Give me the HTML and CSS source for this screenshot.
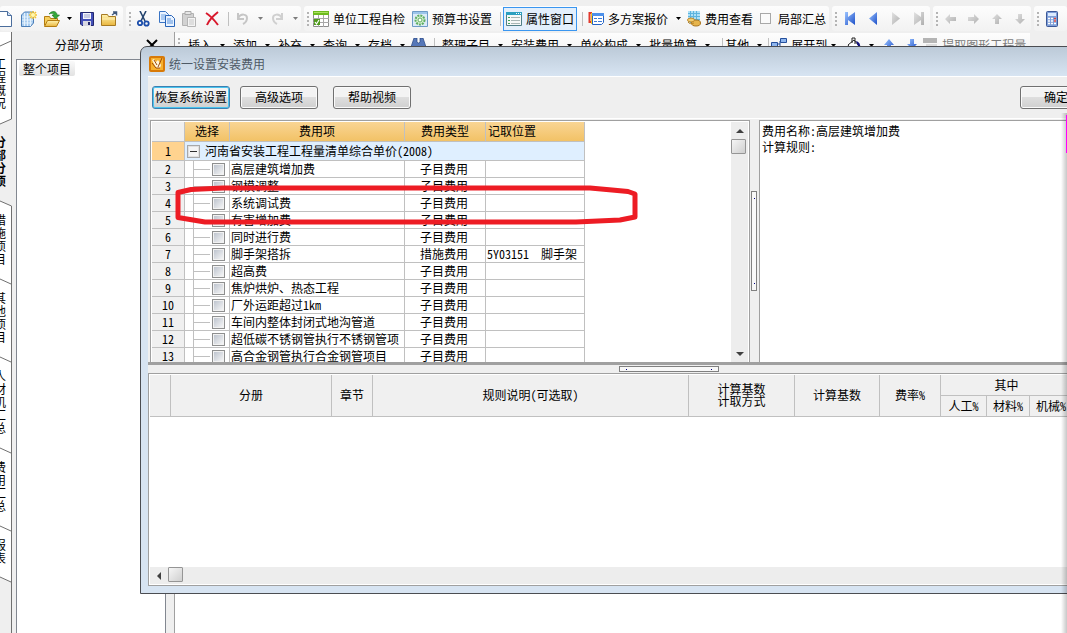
FILE: index.html
```html
<!DOCTYPE html>
<html lang="zh-CN">
<head>
<meta charset="utf-8">
<title>统一设置安装费用</title>
<link rel="stylesheet" href="styles.css">
</head>
<body>
<svg class="defs" aria-hidden="true">
  <defs>
    <linearGradient id="gold" x1="0" y1="0" x2="0" y2="1"><stop offset="0" stop-color="#fff3b0"/><stop offset="1" stop-color="#e9b53c"/></linearGradient>
    <linearGradient id="blue" x1="0" y1="0" x2="1" y2="1"><stop offset="0" stop-color="#9cc4ff"/><stop offset="1" stop-color="#1c4fc8"/></linearGradient>
    <linearGradient id="grey" x1="0" y1="0" x2="1" y2="1"><stop offset="0" stop-color="#e2e2e2"/><stop offset="1" stop-color="#b0b0b0"/></linearGradient>
    <symbol id="caret" viewBox="0 0 5 3"><path d="M0 0h5L2.500 3z" fill="currentColor"/></symbol>
  </defs>
</svg>
<div class="app">
  <div class="toolbar">
    <div class="group group-first">
      <button class="tool" aria-label="新建"><svg width="14" height="16"><path d="M.500.500h8l4 4v11H.500z" fill="#fff" stroke="#4a6d9c"/><path d="M8.500.500v4h4" fill="#cfe0f5" stroke="#4a6d9c"/></svg></button>
      <button class="tool" aria-label="新建项目"><svg width="16" height="16"><path d="M.500 4l3-3h9v11l-3 3.500h-9z" fill="#a9cdf0" stroke="#4c7fb8"/><path d="M3.500 2v13M6.500 2v13M9.500 2v13M1 6h11M1 9h11M1 12h10" stroke="#e4f1fc"/><path d="M12 0v8M8 4h8M9 1l6 6M15 1L9 7" stroke="#f4c430" stroke-width="1.500"/><circle cx="12" cy="4" r="2" fill="#fff7b0"/></svg></button>
      <button class="tool" aria-label="打开"><svg width="16" height="16"><path d="M.500 14.500v-9h5l1 2h7v3" fill="#f6cf5c" stroke="#b47c10"/><path d="M.500 15.500l3-6h12l-3 6z" fill="url(#gold)" stroke="#b47c10"/><path d="M5 3C8-1 13 0 13 4h2.500L11.500 8 8 4h2C10 2 7 2 5 3z" fill="#35a83a" stroke="#15701d" stroke-width=".6"/></svg></button>
      <button class="drop" aria-label="打开选项"><svg width="5" height="3"><use href="#caret"/></svg></button>
      <button class="tool" aria-label="保存"><svg width="14" height="14"><path d="M.500.500h13v13H2l-1.500-1.500z" fill="#4350b8" stroke="#23286e"/><path d="M3 1h8v6H3z" fill="#f4f5fb"/><path d="M4 3h6M4 5h6" stroke="#9aa0cc"/><path d="M3 9h8v5H3z" fill="#d8d8e2"/><path d="M8 10h2v3H8z" fill="#23286e"/></svg></button>
      <button class="tool" aria-label="关闭项目"><svg width="17" height="15"><path d="M.500 3.500h6l1 2h7v9H.500z" fill="url(#gold)" stroke="#a77a22"/><path d="M1 8h13" stroke="#fff0b4"/><path d="M11 4l4-3M12 1h3.500v3.500" fill="none" stroke="#41597c" stroke-width="1.500"/></svg></button>
    </div>
    <div class="group">
      <i class="grip"></i>
      <button class="tool" aria-label="剪切"><svg width="13" height="16"><path d="M3 0l5 10M9 0L4 10" stroke="#26456f" stroke-width="1.600"/><circle cx="3" cy="12" r="2.200" fill="none" stroke="#1b4dab" stroke-width="1.800"/><circle cx="9.500" cy="12.500" r="2.200" fill="none" stroke="#1b4dab" stroke-width="1.800"/></svg></button>
      <button class="tool" aria-label="复制"><svg width="16" height="16"><path d="M.500.500h6l3 3v8h-9z" fill="#eaf3ff" stroke="#3a74c4"/><path d="M2 4h5M2 6h5M2 8h5" stroke="#6ca2e4"/><path d="M6.500 4.500h6l3 3v8h-9z" fill="#eaf3ff" stroke="#2864b8"/><path d="M8 8h4M8 10h6M8 12h6" stroke="#5791dc"/></svg></button>
      <button class="tool" aria-label="粘贴"><svg width="15" height="16"><path d="M.500 2.500h11v12H.500z" fill="#d2d2d2" stroke="#b2b2b2"/><path d="M3 .500h6v3H3z" fill="#e6e6e6" stroke="#aaa"/><path d="M5.500 6.500h8v9h-8z" fill="#f4f4f4" stroke="#b5b5b5"/><path d="M7 9h5M7 11h5M7 13h5" stroke="#c8c8c8"/></svg></button>
      <button class="tool" aria-label="删除"><svg width="15" height="15"><path d="M1 2c5 3 9 8 12 12M13 1C8 5 4 9 2 14" fill="none" stroke="#d8182c" stroke-width="2"/></svg></button>
      <i class="sep"></i>
      <button class="tool" aria-label="撤销"><svg width="13" height="13"><path d="M2 1v6h6M2 6c3-5 9-4 9 0 0 3-2 5-4 6" fill="none" stroke="#c6c6c6" stroke-width="2"/></svg></button>
      <button class="drop muted" aria-label="撤销列表"><svg width="5" height="3"><use href="#caret"/></svg></button>
      <button class="tool" aria-label="重做"><svg width="13" height="13"><path d="M11 1v6H5M11 6C8 1 2 2 2 6c0 3 2 5 4 6" fill="none" stroke="#d0d0d0" stroke-width="2"/></svg></button>
      <button class="drop muted" aria-label="重做列表"><svg width="5" height="3"><use href="#caret"/></svg></button>
    </div>
    <div class="group">
      <i class="grip"></i>
      <button class="cmd"><svg width="16" height="16"><path d="M.500.500h15v15H.500z" fill="#fff" stroke="#8d8d8d"/><path d="M0 0h16v4H0z" fill="#6dbb1f"/><path d="M1 1h14v1H1z" fill="#a9e060"/><path d="M5.500 4v12M10.500 4v12M0 7.500h16M0 11.500h16" stroke="#a8a8a8"/><path d="M1 8h6v6H1z" fill="#4f9a1c"/><path d="M2 11l1.500 2L6 9" fill="none" stroke="#fff" stroke-width="1.200"/></svg>单位工程自检</button>
      <button class="cmd"><svg width="16" height="16"><path d="M.500.500h15v15H.500z" fill="#dcebf8" stroke="#6e9bc6"/><path d="M1 1h14v2H1z" fill="#9cc5ea"/><circle cx="8" cy="9" r="4.500" fill="#d7f0d0" stroke="#5fae62" stroke-width="2" stroke-dasharray="2 1"/><circle cx="8" cy="9" r="2" fill="#fff" stroke="#5fae62"/></svg>预算书设置</button>
      <i class="sep"></i>
      <button class="cmd active"><svg width="16" height="14"><path d="M.500.500h15v13H.500z" fill="#f6f8f8" stroke="#4f7f88"/><path d="M0 0h16v3H0z" fill="#2b9fc0"/><path d="M10 1h1v1h-1zM12 1h1v1h-1zM14 1h1v1h-1z" fill="#fff"/><path d="M2 5.500h2M2 8.500h2M2 11.500h2" stroke="#3fa35a"/><path d="M5 5.500h9M5 8.500h9M5 11.500h9" stroke="#a7b5b5"/></svg>属性窗口</button>
      <i class="sep"></i>
      <button class="cmd"><svg width="16" height="14"><path d="M4 1H1.500v9H4" fill="none" stroke="#e23a2e" stroke-width="2"/><path d="M3 1h1v11H3z" fill="#f4c61d"/><path d="M4.500 1.500h11v9l-2 2h-9z" fill="#fff" stroke="#2463c4"/><path d="M4 1h12v3H4z" fill="#4d90ea"/><path d="M6 6.500h3M10 6.500h4M6 9.500h3M10 9.500h4" stroke="#3d7bd6"/></svg>多方案报价</button>
      <button class="drop" aria-label="报价选项"><svg width="5" height="3"><use href="#caret"/></svg></button>
      <button class="cmd"><svg width="14" height="16"><path d="M1 0h12v12H1z" fill="#aee0f7"/><path d="M1 2.500h12M1 5.500h12M1 8.500h12M3.500 0v12M6.500 0v12M9.500 0v12" stroke="#5db4de"/><ellipse cx="9" cy="12" rx="4.500" ry="3" fill="#e7b54c" stroke="#a9741d"/><ellipse cx="4" cy="9" rx="3.500" ry="2" fill="#f3cf75" stroke="#b98428"/><path d="M1 11c1 2 4 2 6 1" fill="none" stroke="#b98428"/></svg>费用查看</button>
      <label class="opt"><input type="checkbox" class="tick">局部汇总</label>
    </div>
    <div class="group">
      <i class="grip"></i>
      <button class="tool" aria-label="第一条"><svg width="10" height="13"><path d="M0 0h3v5l7-5v13L3 8v5H0z" fill="url(#blue)"/></svg></button>
      <button class="tool" aria-label="上一条"><svg width="8" height="13"><path d="M8 0v13L0 6.500z" fill="url(#blue)"/></svg></button>
      <button class="tool" aria-label="下一条"><svg width="8" height="13"><path d="M0 0v13l8-6.500z" fill="url(#grey)"/></svg></button>
      <button class="tool" aria-label="最后一条"><svg width="10" height="13"><path d="M10 0H7v5L0 0v13l7-5v5h3z" fill="url(#grey)"/></svg></button>
    </div>
    <div class="group">
      <i class="grip"></i>
      <button class="tool" aria-label="左移"><svg width="11" height="10"><path d="M0 5l5-5v3h6v4H5v3z" fill="url(#grey)"/></svg></button>
      <button class="tool" aria-label="右移"><svg width="11" height="10"><path d="M11 5L6 0v3H0v4h6v3z" fill="url(#grey)"/></svg></button>
      <button class="tool" aria-label="上移"><svg width="10" height="10"><path d="M5 0l5 5H7v5H3V5H0z" fill="url(#grey)"/></svg></button>
      <button class="tool" aria-label="下移"><svg width="10" height="10"><path d="M5 10L0 5h3V0h4v5h3z" fill="url(#grey)"/></svg></button>
    </div>
    <div class="group group-last">
      <i class="grip"></i>
      <button class="tool" aria-label="计算器"><svg width="12" height="16"><rect x=".500" y=".500" width="11" height="15" rx="1" fill="#7f9fd8" stroke="#3b5797"/><path d="M2 2h8v3H2z" fill="#dcebff"/><path d="M2 7.500h8M2 10h8M2 12.500h8" stroke="#fff" stroke-width="1.500" stroke-dasharray="2 1"/><path d="M8 7.500h2M8 10h2" stroke="#e0443a" stroke-width="1.500"/></svg></button>
    </div>
  </div>

  <div class="workspace">
    <nav class="tabs">
      <svg class="tab-lines" width="12" height="601"><path d="M0 0h11v87L0 92zM0 169l11 5v376L0 545z" fill="#fff"/><path d="M0 14l11-5M11.500 0v87L0 92M0 169l11.500 5v427M0 247l11 5M0 325l11 5M0 416l11 5M0 494l11 5M0 545l11 5" fill="none" stroke="#707070"/></svg>
      <a class="tab" href="#">工程概况</a>
      <a class="tab current" href="#">分部分项</a>
      <a class="tab" href="#">措施项目</a>
      <a class="tab" href="#">其他项目</a>
      <a class="tab" href="#">人材机汇总</a>
      <a class="tab" href="#">费用汇总</a>
      <a class="tab" href="#">报表</a>
    </nav>
    <aside class="side">
      <div class="side-head"><span class="side-title">分部分项</span><button class="close" aria-label="关闭"><svg width="12" height="12"><path d="M1 1l10 10M11 1L1 11" stroke="#000" stroke-width="2"/></svg></button></div>
      <div class="side-body"><button class="node">整个项目</button></div>
    </aside>
    <main class="main">
      <div class="toolbar2">
        <i class="grip"></i>
        <button class="menu first">插入<svg width="5" height="3"><use href="#caret"/></svg></button>
        <button class="menu">添加<svg width="5" height="3"><use href="#caret"/></svg></button>
        <button class="menu">补充<svg width="5" height="3"><use href="#caret"/></svg></button>
        <button class="menu">查询<svg width="5" height="3"><use href="#caret"/></svg></button>
        <button class="menu">存档<svg width="5" height="3"><use href="#caret"/></svg></button>
        <button class="tool find" aria-label="查找"><svg width="15" height="14"><path d="M3 0h3v4l1 1h1l1-1V0h3l3 9v5H9V9H6v5H0V9z" fill="#5577b8" stroke="#24447e" stroke-width=".7"/></svg></button>
        <i class="sep wide"></i>
        <button class="menu">整理子目<svg width="5" height="3"><use href="#caret"/></svg></button>
        <button class="menu">安装费用<svg width="5" height="3"><use href="#caret"/></svg></button>
        <button class="menu">单价构成<svg width="5" height="3"><use href="#caret"/></svg></button>
        <button class="menu">批量换算<svg width="5" height="3"><use href="#caret"/></svg></button>
        <i class="sep"></i>
        <button class="menu tight">其他<svg width="5" height="3"><use href="#caret"/></svg></button>
        <i class="sep"></i>
        <button class="menu lead"><svg width="16" height="15"><path d="M9.500.500h6v4h-6zM.500 4.500h6v4h-6zM9.500 8.500h6v4h-6z" fill="#8fb6ee" stroke="#244f9c"/><path d="M7 6h2V3M9 6v4" fill="none" stroke="#244f9c"/></svg>展开到<svg width="5" height="3"><use href="#caret"/></svg></button>
        <button class="tool" aria-label="填充"><svg width="14" height="16"><path d="M1 8l6-5 5 6-6 6z" fill="#fff" stroke="#222"/><path d="M5 6V1h3v6" fill="none" stroke="#222"/><path d="M9 4c4 1 5 5 4 9l-2-4z" fill="#10107c"/></svg></button>
        <button class="drop" aria-label="填充颜色"><svg width="5" height="3"><use href="#caret"/></svg></button>
        <button class="tool" aria-label="上移"><svg width="10" height="12"><path d="M5 0l5 6H7v6H3V6H0z" fill="url(#blue)"/></svg></button>
        <button class="tool" aria-label="下移"><svg width="10" height="12"><path d="M5 10L0 5h3V0h4v5h3z" fill="url(#blue)"/></svg></button>
        <button class="menu lead muted"><svg width="15" height="15"><path d="M0 0h14v5H0z" fill="#b4b4b4"/><path d="M3 6h11v8H3z" fill="#ddd"/></svg>提取图形工程量</button>
      </div>
    </main>
  </div>

  <section class="dialog" role="dialog" aria-labelledby="dlg-title">
    <header class="titlebar">
      <svg width="16" height="16"><rect x="1" y="1" width="14" height="14" rx="1" fill="#f6b12e" stroke="#d87a08" stroke-width="2"/><path d="M3 4l4 8h4l1-3-3-5-2 2-2-3z" fill="#fff6dc"/><path d="M13 2L9 11M5 4l3 5M3 7l4 5h4" fill="none" stroke="#9c4a08"/></svg>
      <h1 id="dlg-title">统一设置安装费用</h1>
    </header>
    <div class="content">
      <div class="actions">
        <button class="btn focus">恢复系统设置</button>
        <button class="btn second">高级选项</button>
        <button class="btn third">帮助视频</button>
        <button class="btn ok">确定</button>
      </div>
      <div class="upper">
        <div class="pane grid-pane">
          <div class="grid-view">
            <table class="grid">
              <colgroup><col class="c-no"><col class="c-sel"><col class="c-name"><col class="c-type"><col class="c-pos"></colgroup>
              <thead><tr><th class="corner"></th><th>选择</th><th>费用项</th><th>费用类型</th><th class="left">记取位置</th></tr></thead>
              <tbody>
                <tr class="root"><th>1</th><td colspan="4"><div class="root-line"><button class="expander" aria-label="折叠"></button>河南省安装工程工程量清单综合单价(2008)</div></td></tr>
                <tr><th>2</th><td class="tree"><input type="checkbox" id="f2"></td><td><label for="f2">高层建筑增加费</label></td><td class="mid">子目费用</td><td></td></tr>
                <tr><th>3</th><td class="tree"><input type="checkbox" id="f3"></td><td><label for="f3">钢模调整</label></td><td class="mid">子目费用</td><td></td></tr>
                <tr><th>4</th><td class="tree"><input type="checkbox" id="f4"></td><td><label for="f4">系统调试费</label></td><td class="mid">子目费用</td><td></td></tr>
                <tr><th>5</th><td class="tree"><input type="checkbox" id="f5"></td><td><label for="f5">有害增加费</label></td><td class="mid">子目费用</td><td></td></tr>
                <tr><th>6</th><td class="tree"><input type="checkbox" id="f6"></td><td><label for="f6">同时进行费</label></td><td class="mid">子目费用</td><td></td></tr>
                <tr><th>7</th><td class="tree"><input type="checkbox" id="f7"></td><td><label for="f7">脚手架搭拆</label></td><td class="mid">措施费用</td><td class="code">5Y03151&nbsp; 脚手架</td></tr>
                <tr><th>8</th><td class="tree"><input type="checkbox" id="f8"></td><td><label for="f8">超高费</label></td><td class="mid">子目费用</td><td></td></tr>
                <tr><th>9</th><td class="tree"><input type="checkbox" id="f9"></td><td><label for="f9">焦炉烘炉、热态工程</label></td><td class="mid">子目费用</td><td></td></tr>
                <tr><th>10</th><td class="tree"><input type="checkbox" id="f10"></td><td><label for="f10">厂外运距超过1km</label></td><td class="mid">子目费用</td><td></td></tr>
                <tr><th>11</th><td class="tree"><input type="checkbox" id="f11"></td><td><label for="f11">车间内整体封闭式地沟管道</label></td><td class="mid">子目费用</td><td></td></tr>
                <tr><th>12</th><td class="tree"><input type="checkbox" id="f12"></td><td><label for="f12">超低碳不锈钢管执行不锈钢管项</label></td><td class="mid">子目费用</td><td></td></tr>
                <tr><th>13</th><td class="tree"><input type="checkbox" id="f13"></td><td><label for="f13">高合金钢管执行合金钢管项目</label></td><td class="mid">子目费用</td><td></td></tr>
              </tbody>
            </table>
          </div>
          <div class="vscroll">
            <button class="arrow" aria-label="向上"><svg width="8" height="4"><path d="M0 4h8L4 0z" fill="#404040"/></svg></button>
            <i class="thumb"></i>
            <button class="arrow end" aria-label="向下"><svg width="8" height="4"><path d="M0 0h8L4 4z" fill="#404040"/></svg></button>
          </div>
        </div>
        <div class="vsplit"><i class="handle"></i></div>
        <div class="pane info"><p>费用名称:高层建筑增加费</p><p>计算规则:</p></div>
      </div>
      <div class="hsplit"><i class="handle"></i></div>
      <div class="pane lower">
        <div class="rules-view">
          <table class="rules">
            <colgroup><col class="r1"><col class="r2"><col class="r3"><col class="r4"><col class="r5"><col class="r6"><col class="r7"><col class="r8"><col class="r9"><col class="r9"></colgroup>
            <thead>
              <tr><th rowspan="2"></th><th rowspan="2">分册</th><th rowspan="2">章节</th><th rowspan="2">规则说明(可选取)</th><th rowspan="2">计算基数<br>计取方式</th><th rowspan="2">计算基数</th><th rowspan="2">费率%</th><th colspan="3">其中</th></tr>
              <tr><th>人工%</th><th>材料%</th><th>机械%</th></tr>
            </thead>
          </table>
        </div>
        <div class="hscroll">
          <button class="arrow" aria-label="向左"><svg width="4" height="8"><path d="M4 0v8L0 4z" fill="#404040"/></svg></button>
          <i class="thumb"></i>
        </div>
      </div>
    </div>
  </section>
  <svg class="mark" width="466" height="44" aria-hidden="true"><path d="M50 4H417l22 2 16 1.500 7 2.500V33l-15 3-22 1-22 1H32L5 33.500V8.500L18 5.500z" fill="none" stroke="#ed1c24" stroke-width="5" stroke-linejoin="round"/></svg>
  <div class="edge"><i class="edge-line"></i></div>
</div>
</body>
</html>
```
FILE: styles.css
```css
* { box-sizing: border-box; }

body, button, input, table, h1, p {
  margin: 0;
  font: 12px/16px "Noto Sans Mono CJK SC", "Noto Sans CJK SC", "Liberation Sans", sans-serif;
  color: #000;
}

button {
  padding: 0;
  border: 0;
  background: none;
  white-space: nowrap;
}

svg { display: block; flex: none; }
.defs { position: absolute; width: 0; height: 0; }

.app {
  position: relative;
  display: flex;
  flex-direction: column;
  height: 100vh;
  overflow: hidden;
  background: #efefef;
}

/* Toolbars */
.toolbar {
  flex: none;
  display: flex;
  gap: 3px;
  height: 32px;
  padding: 6px 0 1px;
}
.group {
  flex: none;
  display: flex;
  align-items: center;
  background: linear-gradient(#fdfdfd, #f2f2f2);
  border-radius: 3px;
}
.group-first { padding-right: 2px; }
.group-first .tool:first-child { margin-left: -6px; }
.group-last { flex: 1; }
.grip {
  flex: none;
  width: 2px;
  height: 14px;
  margin: 0 1px 0 3px;
  background: repeating-linear-gradient(#b4b4b4 0 2px, transparent 2px 4px);
}
.sep {
  flex: none;
  width: 1px;
  height: 14px;
  margin: 0 2px 0 4px;
  background: #c0c0c0;
}
.sep.wide { margin-right: 7px; }
.tool, .drop {
  flex: none;
  display: flex;
  align-items: center;
  justify-content: center;
  width: 23px;
  height: 24px;
}
.drop { width: 12px; }
.find { margin-left: -6px; }
.muted { color: #7c7c7c; }
.cmd, .opt {
  flex: none;
  display: flex;
  align-items: center;
  gap: 4px;
  height: 24px;
  padding: 0 2px;
  border: 1px solid transparent;
}
.cmd { margin-right: 1px; }
.cmd.active {
  border-color: #3a96f0;
  background: #e3effc;
}
.opt { gap: 7px; }
.tick {
  appearance: none;
  width: 11px;
  height: 11px;
  border: 1px solid #a8a8a8;
  background: #fafafa;
}

/* Workspace behind the dialog */
.workspace {
  flex: 1;
  display: flex;
  min-height: 0;
}
.tabs {
  position: relative;
  flex: none;
  display: flex;
  flex-direction: column;
  gap: 26px;
  width: 16px;
  padding-top: 25px;
  overflow: hidden;
}
.tab-lines { position: absolute; left: 0; top: 0; }
.tab {
  position: relative;
  width: 12px;
  margin-left: -6px;
  line-height: 13px;
  color: #000;
  text-decoration: none;
  word-break: break-all;
}
.tab.current { font-weight: bold; }
.side {
  flex: none;
  display: flex;
  flex-direction: column;
  width: 150px;
}
.side-head {
  display: flex;
  align-items: center;
  justify-content: space-between;
  height: 27px;
  padding: 0 8px 1px 39px;
}
.side-body {
  flex: 1;
  padding: 1px 2px;
  border: 1px solid #828790;
  border-bottom: 0;
  background: #fff;
}
.node {
  display: block;
  padding: 0 4px;
  line-height: 15px;
  border-radius: 2px;
  background: linear-gradient(#fafafa, #e2e2e2);
}
.main {
  flex: 1;
  min-width: 0;
  margin-left: 8px;
  border-left: 1px solid #a0a0a0;
  background: linear-gradient(#efefef 27px, #fff 27px);
}
.toolbar2 {
  display: flex;
  align-items: center;
  width: fit-content;
  height: 24px;
  margin-top: 1px;
  padding-right: 4px;
  background: linear-gradient(#fdfdfd, #f2f2f2);
}
.menu {
  flex: none;
  display: flex;
  align-items: center;
}
.menu svg:last-child { margin: 0 8px; }
.menu.tight svg:last-child { margin: 0 2px 0 8px; }
.menu.first { margin-left: 7px; }
.menu.lead { gap: 4px; }
.menu.lead svg:last-child { margin: 0 6px 0 0; }
.menu.muted svg:last-child { margin: 0; }

/* Dialog */
.dialog {
  position: absolute;
  left: 140px;
  right: -37px;
  top: 46px;
  bottom: 39px;
  display: flex;
  flex-direction: column;
  padding: 0 7px 7px;
  border: 1px solid #4b4d52;
  border-radius: 7px 7px 0 0;
  background: linear-gradient(#bccad8, #d7e4f2 29px);
}
.titlebar {
  flex: none;
  display: flex;
  align-items: center;
  gap: 4px;
  height: 29px;
  padding: 5px 1px 0;
}
.titlebar h1 { color: #4e5a66; }
.content {
  flex: 1;
  display: flex;
  flex-direction: column;
  min-height: 0;
  border-top: 1px solid #fff;
  background: #efefef;
}
.actions {
  flex: none;
  display: flex;
  height: 42px;
  padding: 9px 4px 0;
  border-bottom: 1px solid #fff;
}
.btn {
  width: 78px;
  height: 23px;
  padding-bottom: 2px;
  border: 1px solid #707070;
  border-radius: 3px;
  background: linear-gradient(#f3f3f3 0 50%, #dedede 50%, #d0d0d0);
  box-shadow: inset 0 0 0 1px #fafafa;
}
.btn.focus {
  border-color: #3c7fb1;
  box-shadow: inset 0 0 0 1px #48c4ee;
}
.btn.second { margin-left: 10px; }
.btn.third { margin-left: 15px; }
.btn.ok { width: 72px; margin-left: auto; }

.upper {
  flex: 0 0 246px;
  display: flex;
  min-height: 0;
  padding: 1px 0 0 2px;
  border-bottom: 3px solid #a0a0a0;
}
.pane {
  border: 1px solid #a0a0a0;
  border-bottom: 0;
  background: #fff;
}
.grid-pane {
  flex: 0 0 600px;
  display: flex;
  padding: 1px 1px 0;
}
.grid-view { flex: 1; overflow: hidden; }

.grid, .rules {
  border-spacing: 0;
  table-layout: fixed;
}
.grid { width: 433px; }
.c-no { width: 33px; }
.c-sel { width: 45px; }
.c-name { width: 175px; }
.c-type { width: 81px; }
.c-pos { width: 99px; }
.grid th, .grid td {
  height: 17px;
  padding: 0 1px;
  border: 0 solid #c0c0c0;
  border-width: 0 1px 1px 0;
  font-weight: normal;
  text-align: left;
  white-space: nowrap;
  overflow: hidden;
}
.grid tbody th { background: #f0f0f0; text-align: center; }
.grid thead th {
  height: 20px;
  padding-bottom: 1px;
  background: linear-gradient(#f9d594, #f2c266);
  text-align: center;
}
.grid thead .corner { background: #f0f0f0; }
.grid thead .left { padding-left: 2px; text-align: left; }
.grid .mid { padding-left: 15px; }
.grid .root th, .grid .root td { height: 19px; }
.grid .root th { background: #ffd38f; }
.grid .root td { background: #dfefff; }
.root-line { display: flex; align-items: center; gap: 5px; padding-left: 1px; }
.expander {
  width: 13px;
  height: 13px;
  border: 1px solid #a8a8a8;
  background: linear-gradient(#303030, #303030) center / 7px 1px no-repeat, #f4f4f4;
  box-shadow: inset 0 0 0 1px #e0e0e0;
}
.grid .tree {
  padding: 0 0 0 27px;
  background:
    linear-gradient(#c0c0c0, #c0c0c0) 8px 0 / 1px 100% no-repeat,
    linear-gradient(#c0c0c0, #c0c0c0) 8px 8px / 17px 1px no-repeat;
}
.tree input {
  appearance: none;
  display: block;
  width: 13px;
  height: 13px;
  border: 1px solid #8e8f8f;
  background: linear-gradient(135deg, #b8bfca, #fafafa);
  box-shadow: inset 0 0 0 1px #f2f2f2;
}

.vscroll, .hscroll { display: flex; background: #ededed; }
.vscroll { flex: 0 0 16px; flex-direction: column; }
.hscroll { flex: 0 0 15px; }
.arrow {
  display: flex;
  align-items: center;
  justify-content: center;
  width: 17px;
  height: 17px;
}
.arrow.end { margin-top: auto; }
.thumb {
  width: 15px;
  height: 15px;
  border: 1px solid #959595;
  border-radius: 1px;
  background: linear-gradient(135deg, #f6f6f6, #cfcfcf);
}
.vsplit {
  flex: 0 0 9px;
  display: flex;
  align-items: center;
  padding-left: 1px;
}
.handle {
  border: 1px solid #808080;
  background: #f8f8f8;
}
.vsplit .handle { width: 6px; height: 100px; }
.hsplit {
  flex: 0 0 8px;
  display: flex;
  align-items: center;
  padding-left: 471px;
}
.hsplit .handle {
  width: 100px;
  height: 6px;
  background:
    linear-gradient(#000080, #000080) 6px 2px / 1px 1px no-repeat,
    linear-gradient(#000080, #000080) 91px 2px / 1px 1px no-repeat,
    #f8f8f8;
}
.vsplit .handle {
  background:
    linear-gradient(#000080, #000080) 2px 6px / 1px 1px no-repeat,
    linear-gradient(#000080, #000080) 2px 91px / 1px 1px no-repeat,
    #f8f8f8;
}
.info { flex: 1; padding: 2px; }

.lower {
  flex: 1;
  display: flex;
  flex-direction: column;
  min-height: 0;
  padding: 1px;
  border-bottom: 1px solid #a0a0a0;
}
.rules-view { flex: 1; overflow: hidden; }
.rules { width: 923px; }
.r1 { width: 21px; }
.r2 { width: 161px; }
.r3 { width: 41px; }
.r4 { width: 316px; }
.r5 { width: 106px; }
.r6 { width: 85px; }
.r7 { width: 61px; }
.r8 { width: 46px; }
.r9 { width: 43px; }
.rules th {
  height: 21px;
  padding: 0 0 1px;
  border: 0 solid #c0c0c0;
  border-width: 0 1px 1px 0;
  background: #f0f0f0;
  font-weight: normal;
  line-height: 12px;
  white-space: nowrap;
}
.hscroll .thumb { margin-left: 1px; }

/* Overlays */
.mark { position: absolute; left: 173px; top: 184px; }
.edge {
  position: absolute;
  right: 0;
  top: 113px;
  bottom: 0;
  width: 6px;
  background: linear-gradient(90deg, transparent, #00000038);
}
.edge-line {
  display: block;
  width: 1px;
  height: 38px;
  margin: 2px 0 0 auto;
  background: #f0f;
}
```
